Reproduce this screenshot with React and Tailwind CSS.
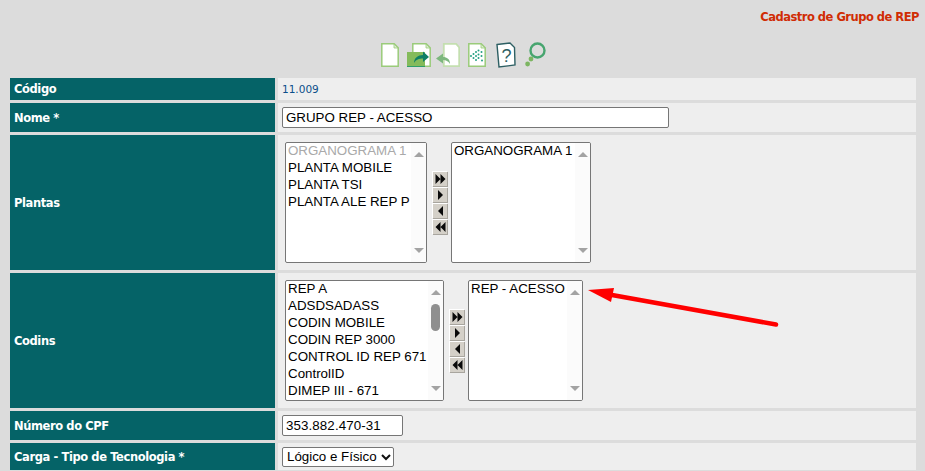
import React from 'react';

const Row = ({ label, className, children }) => (
  <div className={`flex gap-[3px] ${className}`}>
    <div className="w-[265px] shrink-0 bg-[#056367] flex items-center pl-[4px] pt-[2px] text-white font-bold text-[11.5px] tracking-[-0.4px] font-['DejaVu_Sans',sans-serif]">
      {label}
    </div>
    <div className="flex-1 bg-[#eeeeee] flex items-center pl-[4px] font-['Liberation_Sans',sans-serif]">
      {children}
    </div>
  </div>
);

const ListBox = ({ items, width, thumb }) => (
  <div className={`h-[121px] ${width} bg-white border border-[#767676] rounded-[2px] flex overflow-hidden`}>
    <div className="flex-1 pl-[2px] -mt-px text-[13.33px] leading-[17px] text-black whitespace-nowrap overflow-hidden">
      {items.map((item, i) => (
        <div key={item} className={item === 'ORGANOGRAMA 1' && i === 0 && items.length > 1 ? 'text-[#a9a9a9]' : ''}>
          {item}
        </div>
      ))}
    </div>
    <div className="w-[15px] bg-[#fbfbfb] flex flex-col items-center justify-between py-[9px] relative">
      <div className="w-0 h-0 border-x-[5px] border-x-transparent border-b-[5px] border-b-[#a3a3a3]" />
      {thumb && <div className="absolute top-[23px] w-[9px] h-[27px] rounded-full bg-[#8f8f8f]" />}
      <div className="w-0 h-0 border-x-[5px] border-x-transparent border-t-[5px] border-t-[#a3a3a3]" />
    </div>
  </div>
);

const MoveBtn = ({ d }) => (
  <div className="w-[15px] h-[15px] bg-[#d4d0c8] border-t border-l border-white shadow-[1px_1px_0_#a8a59e] flex items-center justify-center">
    <svg width="11" height="10" viewBox="0 0 11 10">
      <path d={d} fill="#0a0a0a" />
    </svg>
  </div>
);

const MoveButtons = () => (
  <div className="flex flex-col gap-px ml-[5px] mr-[4px]">
    <MoveBtn d="M0.500 0l5 5-5 5zM5.500 0l5 5-5 5z" />
    <MoveBtn d="M3 0l5 5-5 5z" />
    <MoveBtn d="M8 0L3 5l5 5z" />
    <MoveBtn d="M5.500 0L0.500 5l5 5zM10.500 0l-5 5 5 5z" />
  </div>
);

const Toolbar = () => (
  <div className="flex items-center h-[26px] pl-[381px]">
    <svg width="18" height="24" viewBox="0 0 18 24">
      <path d="M.8.8h12.400l4 4v18.400H.8z" fill="#fff" stroke="#9acb7a" strokeWidth="1.500" />
      <path d="M13 1v4h4z" fill="#dcebd0" stroke="#9acb7a" strokeWidth=".8" />
    </svg>
    <svg className="ml-[8px]" width="24" height="24" viewBox="0 0 24 24">
      <path d="M5.800.8h13.400l4 4v18.400H5.800z" fill="#fff" stroke="#9acb7a" strokeWidth="1.500" />
      <path d="M19 1v4h4z" fill="#dcebd0" stroke="#9acb7a" strokeWidth=".8" />
      <path d="M0 9h18v15H0z" fill="#84bb5b" />
      <path d="M0 23h18v1H0z" fill="#2f9e6a" />
      <path d="M7 20c0-5 4-8 9-8V8.500l6 5.500-6 5v-3.500c-4 0-7 1-9 4.500z" fill="#0f7f66" />
    </svg>
    <svg className="ml-[5px]" width="24" height="24" viewBox="0 0 24 24">
      <path d="M7.800.9h12.400l3 3.500v18.800H7.800z" fill="#fff" stroke="#c4dfb0" strokeWidth="1.800" />
      <path d="M14 21c0-5-3-7-7-7V10.500L0 15.500l7 5V17c3 0 5 1 7 4z" fill="#7db77e" />
    </svg>
    <svg className="ml-[8px]" width="18" height="24" viewBox="0 0 18 24">
      <path d="M.8.8h12.400l4 4v18.400H.8z" fill="#fff" stroke="#9acb7a" strokeWidth="1.500" />
      <path d="M13 1v4h4z" fill="#dcebd0" stroke="#9acb7a" strokeWidth=".8" />
      {[[3, 13], [5.500, 11], [5.500, 15], [8, 9], [8, 13], [8, 17], [10.500, 7.500], [10.500, 11.500], [10.500, 15], [13.500, 13], [14, 17.500], [13.500, 9]].map(([x, y]) => (
        <circle key={`${x}-${y}`} cx={x} cy={y} r="1" fill="#23a083" />
      ))}
    </svg>
    <svg className="ml-[10px]" width="20" height="26" viewBox="0 0 20 26">
      <path d="M1 2.500l13-1.500 4.500 4.500L19 23 3 25z" fill="#fff" stroke="#2d5f63" strokeWidth="1.400" />
      <text x="10.500" y="20" textAnchor="middle" fontSize="18" fontFamily="Liberation Sans" fill="#2d5f63">?</text>
    </svg>
    <svg className="ml-[9px]" width="22" height="26" viewBox="0 0 22 26">
      <circle cx="12.500" cy="8.500" r="7" fill="none" stroke="#47a56f" strokeWidth="2.400" />
      <circle cx="6" cy="17" r="2.400" fill="#7cb561" />
      <circle cx="2.600" cy="22" r="2.400" fill="#7cb561" />
    </svg>
  </div>
);

export default function App() {
  return (
    <div className="relative h-[471px] overflow-hidden bg-[#dcdcdc]">
      <div className="h-[42px] flex justify-end pt-[10px] pr-[6px] text-[11.5px] tracking-[-0.5px] leading-[14px] font-bold text-[#d02c04] font-['DejaVu_Sans',sans-serif]">
        Cadastro de Grupo de REP
      </div>
      <Toolbar />
      <div className="flex flex-col gap-[3px] pl-[10px] pr-[9px] mt-[10px]">
        <Row label="Código" className="h-[22px]">
          <span className="pt-[1px] text-[10.5px] text-[#0b4f8a] font-['DejaVu_Sans',sans-serif]">11.009</span>
        </Row>
        <Row label="Nome *" className="h-[29px]">
          <div className="w-[387px] h-[21px] bg-white border border-[#767676] rounded-[2px] pl-[3px] text-[13.33px] leading-[19px] text-black">
            GRUPO REP - ACESSO
          </div>
        </Row>
        <Row label="Plantas" className="h-[135px]">
          <div className="flex items-center pl-[3px]">
            <ListBox width="w-[142px]" items={['ORGANOGRAMA 1', 'PLANTA MOBILE', 'PLANTA TSI', 'PLANTA ALE REP P']} />
            <MoveButtons />
            <ListBox width="w-[140px]" items={['ORGANOGRAMA 1']} />
          </div>
        </Row>
        <Row label="Codins" className="h-[135px]">
          <div className="flex items-center pl-[3px]">
            <ListBox
              width="w-[159px]"
              thumb
              items={['REP A', 'ADSDSADASS', 'CODIN MOBILE', 'CODIN REP 3000', 'CONTROL ID REP 671', 'ControlID', 'DIMEP III - 671']}
            />
            <MoveButtons />
            <ListBox width="w-[115px]" items={['REP - ACESSO']} />
          </div>
        </Row>
        <Row label="Número do CPF" className="h-[29px]">
          <div className="w-[121px] h-[21px] bg-white border border-[#767676] rounded-[2px] pl-[3px] text-[13.33px] tracking-[0.1px] leading-[19px] text-black">
            353.882.470-31
          </div>
        </Row>
        <Row label="Carga - Tipo de Tecnologia *" className="h-[27px]">
          <div className="w-[112px] h-[20px] bg-white border border-[#767676] rounded-[2px] pl-[4px] flex items-center justify-between pr-[2px] text-[13.33px] whitespace-nowrap text-black">
            Lógico e Físico
            <svg width="10" height="8" viewBox="0 0 10 8">
              <path d="M1 2l4 4 4-4" fill="none" stroke="#111" strokeWidth="2" />
            </svg>
          </div>
        </Row>
      </div>
      <svg className="absolute left-[585px] top-[280px]" width="200" height="50" viewBox="0 0 200 50">
        <path d="M3 10L29 8L26 22z" fill="#ff0000" />
        <path d="M27 15L191 44.500" stroke="#ff0000" strokeWidth="4.500" strokeLinecap="round" />
      </svg>
    </div>
  );
}
